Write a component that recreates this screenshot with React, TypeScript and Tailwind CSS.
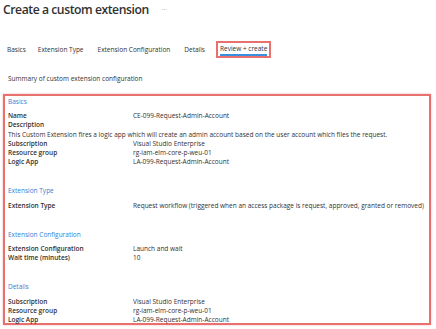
import React from "react";

type Row = { label: string; value?: string; full?: string };

const sections: { title: string; rows: Row[] }[] = [
  {
    title: "Basics",
    rows: [
      { label: "Name", value: "CE-099-Request-Admin-Account" },
      { label: "Description" },
      {
        label: "",
        full: "This Custom Extension fires a logic app which will create an admin account based on the user account which files the request.",
      },
      { label: "Subscription", value: "Visual Studio Enterprise" },
      { label: "Resource group", value: "rg-iam-elm-core-p-weu-01" },
      { label: "Logic App", value: "LA-099-Request-Admin-Account" },
    ],
  },
  {
    title: "Extension Type",
    rows: [
      {
        label: "Extension Type",
        value:
          "Request workflow (triggered when an access package is request, approved, granted or removed)",
      },
    ],
  },
  {
    title: "Extension Configuration",
    rows: [
      { label: "Extension Configuration", value: "Launch and wait" },
      { label: "Wait time (minutes)", value: "10" },
    ],
  },
  {
    title: "Details",
    rows: [
      { label: "Subscription", value: "Visual Studio Enterprise" },
      { label: "Resource group", value: "rg-iam-elm-core-p-weu-01" },
      { label: "Logic App", value: "LA-099-Request-Admin-Account" },
    ],
  },
];

export default function App() {
  return (
    <div
      className="w-[436px] h-[329px] bg-white overflow-hidden text-[#323130]"
      style={{ fontFamily: '"Open Sans", "Noto Sans", sans-serif' }}
    >
      {/* Title */}
      <div className="flex items-center pl-[3px] pt-[1px] h-[18px]">
        <span className="text-[12.2px] leading-[18px] font-semibold tracking-[-0.45px]">
          Create a custom extension
        </span>
        <span className="ml-[13px] text-[7px] text-[#a19f9d] leading-[18px]">···</span>
      </div>

      {/* Tabs */}
      <div className="flex items-center pl-[7px] mt-[23px] h-[17px] text-[6.5px] leading-[9px]">
        <span>Basics</span>
        <span className="ml-[12px]">Extension Type</span>
        <span className="ml-[14px]">Extension Configuration</span>
        <span className="ml-[14px]">Details</span>
        <span className="ml-[11px] h-[17px] border-2 border-[#e8706f] px-[2px] flex flex-col justify-center">
          <span className="border-b-2 border-[#3a8fe0] leading-[9px] pb-[1px]">Review + create</span>
        </span>
      </div>

      {/* Summary */}
      <div className="pl-[8px] mt-[16px] text-[6.5px] leading-[9px]">
        Summary of custom extension configuration
      </div>

      {/* Summary box */}
      <div className="ml-[3px] mt-[11px] w-[428px] h-[231px] border-2 border-[#e8706f] shadow-[0_0_2px_#f3b5b5] pl-[3px] pt-[1px] text-[6.5px] leading-[9.2px]">
        {sections.map((s, i) => (
          <div key={s.title} className={i === 0 ? "" : "mt-[20px]"}>
            <div className="text-[#2f7fd8] mb-[5px]">{s.title}</div>
            {s.rows.map((r, j) =>
              r.full ? (
                <div key={j} className="whitespace-nowrap">
                  {r.full}
                </div>
              ) : (
                <div key={j} className="flex whitespace-nowrap">
                  <span className="w-[125px] shrink-0 font-semibold">{r.label}</span>
                  {r.value && <span>{r.value}</span>}
                </div>
              )
            )}
          </div>
        ))}
      </div>
    </div>
  );
}
